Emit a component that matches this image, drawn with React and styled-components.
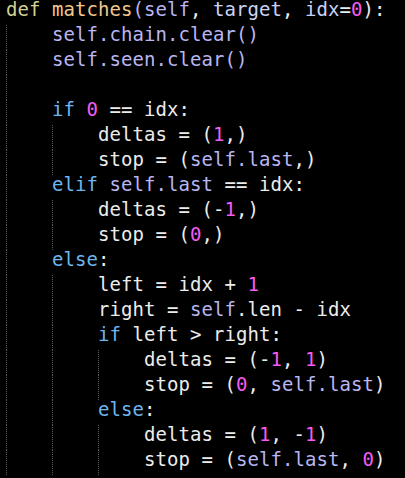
import React from 'react'
import styled, { createGlobalStyle } from 'styled-components';

const GlobalStyle = createGlobalStyle`
  html, body {
    margin: 0;
    padding: 0;
    background: #000;
  }
`

// token kinds -> colours
const colors = {
  txt: '#ececec',
  kw: '#d2cf92',
  fn: '#f3c68e',
  self: '#b9b6f2',
  param: '#c9d2f6',
  ctrl: '#6db6ef',
  num: '#f35cf3',
}

const lines = [
  { indent: 0, tokens: [['kw', 'def'], ['txt', ' '], ['fn', 'matches'], ['self', '('], ['self', 'self'], ['txt', ', '], ['param', 'target'], ['txt', ', '], ['param', 'idx'], ['txt', '='], ['num', '0'], ['txt', '):']] },
  { indent: 1, tokens: [['self', 'self.chain.clear()']] },
  { indent: 1, tokens: [['self', 'self.seen.clear()']] },
  { indent: 1, tokens: [] },
  { indent: 1, tokens: [['ctrl', 'if'], ['txt', ' '], ['num', '0'], ['txt', ' == idx:']] },
  { indent: 2, tokens: [['txt', 'deltas = ('], ['num', '1'], ['txt', ',)']] },
  { indent: 2, tokens: [['txt', 'stop = ('], ['self', 'self.last'], ['txt', ',)']] },
  { indent: 1, tokens: [['ctrl', 'elif'], ['txt', ' '], ['self', 'self.last'], ['txt', ' == idx:']] },
  { indent: 2, tokens: [['txt', 'deltas = (-'], ['num', '1'], ['txt', ',)']] },
  { indent: 2, tokens: [['txt', 'stop = ('], ['num', '0'], ['txt', ',)']] },
  { indent: 1, tokens: [['ctrl', 'else'], ['txt', ':']] },
  { indent: 2, tokens: [['txt', 'left = idx + '], ['num', '1']] },
  { indent: 2, tokens: [['txt', 'right = '], ['self', 'self'], ['txt', '.len - idx']] },
  { indent: 2, tokens: [['ctrl', 'if'], ['txt', ' left > right:']] },
  { indent: 3, tokens: [['txt', 'deltas = (-'], ['num', '1'], ['txt', ', '], ['num', '1'], ['txt', ')']] },
  { indent: 3, tokens: [['txt', 'stop = ('], ['num', '0'], ['txt', ', '], ['self', 'self.last'], ['txt', ')']] },
  { indent: 2, tokens: [['ctrl', 'else'], ['txt', ':']] },
  { indent: 3, tokens: [['txt', 'deltas = ('], ['num', '1'], ['txt', ', -'], ['num', '1'], ['txt', ')']] },
  { indent: 3, tokens: [['txt', 'stop = ('], ['self', 'self.last'], ['txt', ', '], ['num', '0'], ['txt', ')']] },
]

const Editor = () => {
  return (
    <Screen>
      <GlobalStyle />
      <Code>
        {lines.map((line, i) => (
          <Line key={i}>
            {Array.from({ length: line.indent }).map((_, k) => (
              <Indent key={k} $guide={i > 0}>{'    '}</Indent>
            ))}
            {line.tokens.map(([kind, text], j) => (
              <Token key={j} $kind={kind}>{text}</Token>
            ))}
          </Line>
        ))}
      </Code>
    </Screen>
  )
}

const Screen = styled.div`
  width: 405px;
  height: 478px;
  background: #000;
  overflow: hidden;
`

const Code = styled.div`
  display: flex;
  flex-direction: column;
  padding-left: 6px;
  font-family: "DejaVu Sans Mono", "Liberation Mono", monospace;
  font-size: 19px;
  letter-spacing: 0.06px;
  color: ${colors.txt};
`

const Line = styled.div`
  height: 25px;
  line-height: 19px;
  white-space: pre;
  display: flex;
  align-items: stretch;
`

const Indent = styled.span`
  display: inline-block;
  background-image: ${p => p.$guide
    ? 'repeating-linear-gradient(to bottom, #5a5a5a 0 1px, transparent 1px 2px)'
    : 'none'};
  background-size: 1px 100%;
  background-repeat: no-repeat;
  background-position: left top;
`

const Token = styled.span`
  color: ${p => colors[p.$kind]};
`

export default Editor;
